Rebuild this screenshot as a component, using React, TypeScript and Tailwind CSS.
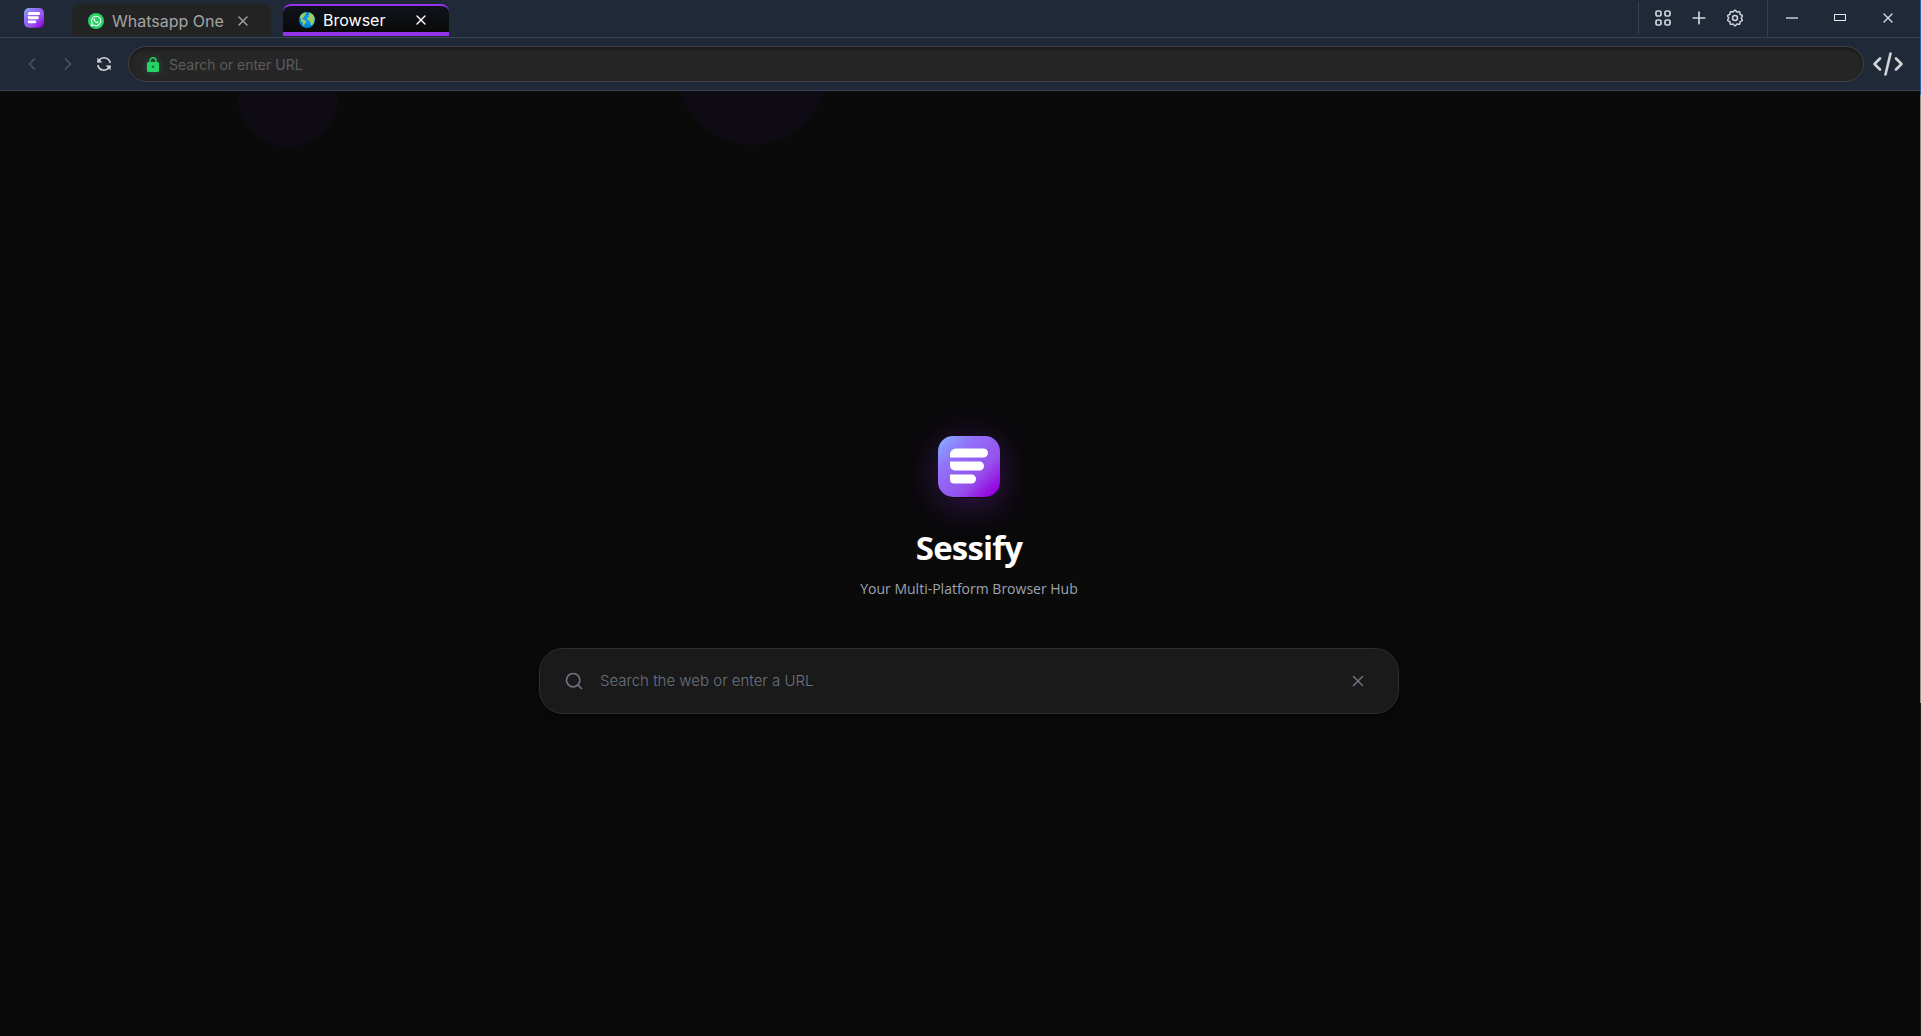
import { useState } from "react";
import clsx from "clsx";
import { ChevronLeft, ChevronRight, Plus, Search, X } from "lucide-react";

function Logo({ className, id }: { className?: string; id: string }) {
  return (
    <svg viewBox="0 0 62 62" className={className} aria-hidden="true">
      <defs>
        <linearGradient id={id} x1="0" y1="0" x2="1" y2="1">
          <stop offset="0" stopColor="#82b4ff" />
          <stop offset="0.3" stopColor="#9271fa" />
          <stop offset="0.65" stopColor="#9650ec" />
          <stop offset="0.92" stopColor="#9400e0" />
          <stop offset="1" stopColor="#9400e0" />
        </linearGradient>
      </defs>
      <rect width="62" height="61" rx="15" fill={`url(#${id})`} />
      <g fill="#fff">
        <path d="M12 21.500V18.500a6 6 0 0 1 6-6h27.500a4.500 4.500 0 0 1 0 9z" />
        <path d="M12 25.500h29.500a4.500 4.500 0 0 1 0 9H17a5 5 0 0 1-5-5z" />
        <path d="M12 38.500h21.500a4.500 4.500 0 0 1 0 9H16a4 4 0 0 1-4-4z" />
      </g>
    </svg>
  );
}

function WhatsappIcon() {
  return (
    <svg viewBox="0 0 16 16" className="size-4" aria-hidden="true">
      <circle cx="8" cy="8" r="8" fill="#25d366" />
      <path d="M3.400 12.700l.7-2.400a4.700 4.700 0 1 1 1.700 1.700z" fill="none" stroke="#fff" strokeWidth="1.100" strokeLinejoin="round" />
      <path d="M6 5.600c.5-.5.8-.3 1 .2l.3.8-.4.700c.4.800 1 1.300 1.800 1.600l.6-.6 1.200.6c.3.800-.6 1.400-1.400 1.300-2-.4-3.600-2-3.700-3.600 0-.4.300-.8.600-1z" fill="#fff" />
    </svg>
  );
}

function GlobeIcon() {
  return (
    <svg viewBox="0 0 16 16" className="size-4" aria-hidden="true">
      <circle cx="8" cy="8" r="8" fill="#0288d1" />
      <circle cx="9" cy="8" r="5" fill="#0a94e4" />
      <g fill="#9ccc65">
        <path d="M1.200 4C2.400 1.900 4.400.6 6.600.200l1 .9-1.400.8.500 1.200-1.500 1.200-.6 1.500-1.500.2.700 1.400 1.900.5 1.600 1.300-.6 1.900-1.200 1-.3 1.900-1.100-.6-.5-2.800-1.500-1.700-.4-2.500-.9-1z" />
        <path d="M9.400 1.300l1.800-.6a8 8 0 0 1 4 4l.7 2.900-.9 1.100-.3 2.300-1.600 2.300-1.300-.4-.3-2.500-.6-1.500-1.800-.3-1-1.400.6-1.900 1.600-.9-.9-.9.600-1.200z" />
      </g>
    </svg>
  );
}

function RefreshIcon() {
  return (
    <svg viewBox="0 0 16 16" className="size-4" fill="none" stroke="currentColor" strokeWidth="1.600" aria-hidden="true">
      <path d="M14.200 7A6.200 6.200 0 0 0 3 4.500L1.500 6.300" />
      <path d="M1.800 9A6.200 6.200 0 0 0 13 11.500l1.500-1.800" />
      <path d="M1.400 1.500v5h5zM14.600 14.500v-5h-5z" fill="currentColor" stroke="none" />
    </svg>
  );
}

function GridIcon() {
  return (
    <svg viewBox="0 0 18 18" className="size-[18px]" fill="none" stroke="currentColor" strokeWidth="1.700" aria-hidden="true">
      <rect x="2" y="2" width="5" height="5" rx="1.500" />
      <rect x="11" y="2" width="5" height="5" rx="1.500" />
      <rect x="2" y="11" width="5" height="5" rx="1.500" />
      <rect x="11" y="11" width="5" height="5" rx="1.500" />
    </svg>
  );
}

// ten-lobed outline of the settings cog
const gearPoints = Array.from({ length: 80 }, (_, i) => {
  const angle = (i / 80) * Math.PI * 2;
  const radius = 7 + 0.7 * Math.cos(angle * 10);
  return `${9 + radius * Math.sin(angle)},${9 - radius * Math.cos(angle)}`;
}).join(" ");

function GearIcon() {
  return (
    <svg viewBox="0 0 18 18" className="size-[18px]" fill="none" stroke="currentColor" strokeWidth="1.500" strokeLinejoin="round" aria-hidden="true">
      <polygon points={gearPoints} />
      <circle cx="9" cy="9" r="2.500" />
    </svg>
  );
}

function LockIcon() {
  return (
    <svg viewBox="0 0 12 15" className="h-[15px] w-3 shrink-0 drop-shadow-[0_0_3px_#25d36655]" aria-hidden="true">
      <path d="M3 6V3.800a3 3 0 0 1 6 0V6" fill="none" stroke="#25d366" strokeWidth="1.400" />
      <rect y="5" width="12" height="10" rx="1.500" fill="#25d366" />
      <circle cx="6" cy="9.800" r="1.200" fill="#1c6b38" />
    </svg>
  );
}

const tabs = [
  { id: "whatsapp", title: "Whatsapp One", icon: <WhatsappIcon /> },
  { id: "browser", title: "Browser", icon: <GlobeIcon /> },
];

function TitleBar() {
  const [active, setActive] = useState("browser");

  return (
    <header className="flex h-[38px] shrink-0 border-b border-[#374151]">
      <div className="flex w-[72px] shrink-0 items-start pt-2 pl-6">
        <Logo id="logo-small" className="size-5" />
      </div>
      <nav className="flex items-start gap-3 pt-1">
        {tabs.map((tab) => (
          <div
            key={tab.id}
            className={clsx(
              "flex h-8 items-center rounded-t-lg pt-[2px] pr-5 pl-4",
              active === tab.id
                ? "w-[166px] border-t-2 border-b-4 border-t-[#9333ea] border-b-[#9333ea] bg-linear-to-b from-[#10141b] to-[#0a0a0a] text-white"
                : "w-[199px] bg-[#232323] text-[#a3a3a3]"
            )}
          >
            <button className="flex flex-1 items-center gap-2 text-left text-base leading-5" onClick={() => setActive(tab.id)}>
              {tab.icon}
              {tab.title}
            </button>
            <button aria-label={`Close ${tab.title}`}>
              <X size={16} strokeWidth={2} />
            </button>
          </div>
        ))}
      </nav>
      <div className="ml-auto flex text-[#d1d5db]">
        <div className="mt-[2px] mb-[3px] flex items-center gap-[18px] border-l border-[#374151] pr-[23px] pl-[15px]">
          <button aria-label="Apps"><GridIcon /></button>
          <button aria-label="New tab"><Plus size={20} strokeWidth={2} className="-mx-px" /></button>
          <button aria-label="Settings"><GearIcon /></button>
        </div>
        <div className="flex border-l border-[#374151] pr-2 pb-[2px]">
          <button aria-label="Minimize" className="flex w-12 items-center justify-center">
            <span className="h-[2px] w-3 bg-[#9ca3af]" />
          </button>
          <button aria-label="Maximize" className="flex w-12 items-center justify-center">
            <span className="h-[7px] w-3 border border-[#e5e7eb]" />
          </button>
          <button aria-label="Close" className="flex w-12 items-center justify-center">
            <X size={16} strokeWidth={2} />
          </button>
        </div>
      </div>
    </header>
  );
}

function AddressBar() {
  return (
    <div className="flex h-[53px] shrink-0 items-center border-b border-[#374151] pr-[17px] pl-[22px]">
      <div className="flex w-[106px] items-center gap-4 text-[#4b5563]">
        <button aria-label="Back"><ChevronLeft size={20} strokeWidth={2} /></button>
        <button aria-label="Forward"><ChevronRight size={20} strokeWidth={2} /></button>
        <button aria-label="Reload" className="flex size-5 items-center justify-center text-[#d4d4d4]"><RefreshIcon /></button>
      </div>
      <label className="flex h-9 flex-1 items-center gap-[10px] rounded-full border border-[#404040] bg-[#262626] px-[18px] shadow-[inset_0_2px_4px_#00000060]">
        <LockIcon />
        <input aria-label="Address" placeholder="Search or enter URL" className="w-full bg-transparent pt-[2px] text-sm text-white outline-none placeholder:text-[#5c5c5c]" />
      </label>
      <button aria-label="Developer tools" className="ml-[9px] text-[#d4d4d4]">
        <svg viewBox="0 0 30 24" className="h-6 w-[30px]" fill="none" stroke="currentColor" strokeWidth="2.600" strokeLinecap="round" strokeLinejoin="round" aria-hidden="true">
          <path d="M7 6.500l-5.500 5.500L7 17.500M23 6.500l5.500 5.500L23 17.500M17.500 1.500l-5 21" />
        </svg>
      </button>
    </div>
  );
}

export default function App() {
  return (
    <div className="flex min-h-screen bg-[#1f2937] font-[Inter,sans-serif]">
      <div className="flex min-w-0 flex-1 flex-col">
        <TitleBar />
        <AddressBar />
        <main className="relative flex flex-1 flex-col items-center overflow-hidden bg-[#0a0a0a] pt-[345px] pl-[18px]">
          {/* floating background bubbles */}
          <div className="absolute -top-11 left-[238px] size-[100px] rounded-full bg-[#0f0b15]" />
          <div className="absolute -top-24 left-[677px] size-[150px] rounded-full bg-[#0f0b15]" />

          <div className="rounded-2xl shadow-[0_8px_32px_#9333ea40,0_0_60px_#9333ea1a]">
            <Logo id="logo-large" className="size-[62px]" />
          </div>
          <h1 className="mt-[26px] font-['Open_Sans',sans-serif] text-[33px] leading-[48px] font-bold tracking-tight text-white">Sessify</h1>
          <p className="mt-[7px] font-['Open_Sans',sans-serif] text-sm leading-5 text-[#9ca3af]">Your Multi-Platform Browser Hub</p>

          <label className="mt-[49px] flex h-[66px] w-full max-w-[860px] items-center rounded-3xl border border-[#2e2e2e] bg-[#1a1a1a] pr-8 pl-6 shadow-[0_4px_16px_#00000066]">
            <Search size={20} strokeWidth={2} className="shrink-0 text-[#6b7280]" />
            <input
              aria-label="Web search"
              placeholder="Search the web or enter a URL"
              className="ml-4 flex-1 bg-transparent text-[15px] font-light text-white outline-none placeholder:text-[#6b7280]"
            />
            <button aria-label="Clear" className="text-[#6b7280]"><X size={18} strokeWidth={2} className="-mx-px" /></button>
          </label>
        </main>
      </div>
      {/* window edge */}
      <div className="flex w-px flex-col bg-[#1c1c1c]">
        <div className="h-[95px] bg-[#2f5f9e]" />
        <div className="h-[608px] bg-[#8f8f88]" />
      </div>
    </div>
  );
}
